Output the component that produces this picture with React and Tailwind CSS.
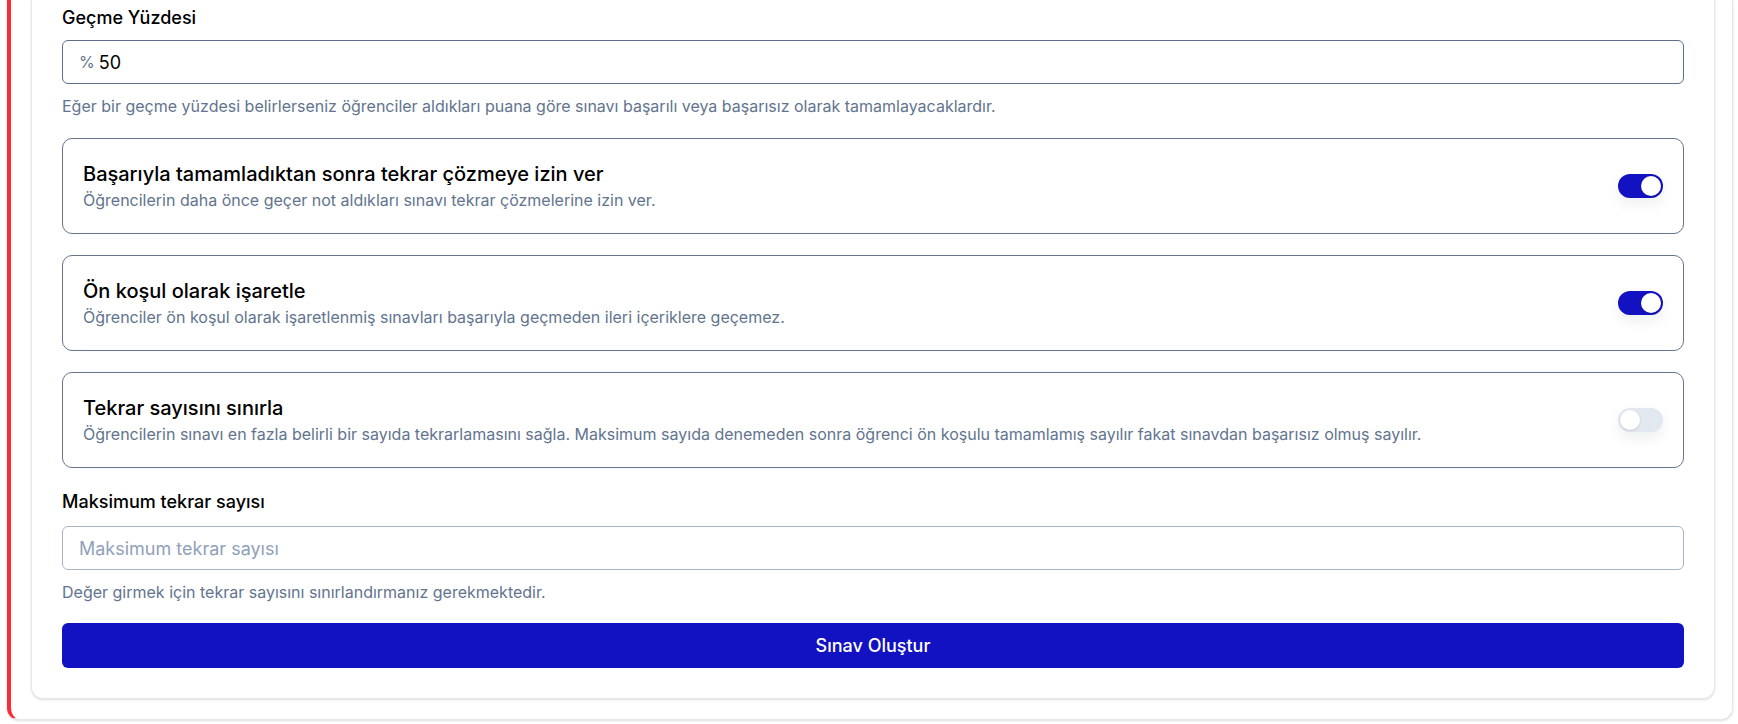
import React, { useState } from 'react';

const font = { fontFamily: 'Inter, "Noto Sans", sans-serif' };

function Toggle({ checked, onChange }) {
  return (
    <button
      type="button"
      onClick={() => onChange(!checked)}
      className={`relative flex h-6 w-[45px] shrink-0 items-center rounded-full px-[2px] shadow-[0_6px_14px_rgba(15,23,42,0.07)] transition-colors ${
        checked ? 'bg-[#1212c2] justify-end' : 'bg-slate-200 justify-start'
      }`}
    >
      <span className="h-5 w-5 rounded-full bg-white shadow-sm" />
    </button>
  );
}

function OptionCard({ title, description, checked, onChange }) {
  return (
    <div className="flex h-24 items-center justify-between gap-6 rounded-[10px] border border-[#66758c] bg-white pl-5 pr-5">
      <div className="flex flex-col">
        <span className="text-[20px] leading-7 font-medium text-black">{title}</span>
        <span className="text-[16px] leading-6 text-slate-500">{description}</span>
      </div>
      <Toggle checked={checked} onChange={onChange} />
    </div>
  );
}

export default function App() {
  const [allowRetake, setAllowRetake] = useState(true);
  const [prerequisite, setPrerequisite] = useState(true);
  const [limitRetries, setLimitRetries] = useState(false);

  return (
    <div className="min-h-screen bg-white pl-[7px] pr-[5px]" style={font}>
      <div className="rounded-b-xl border-l-4 border-b border-r border-red-500 border-b-gray-200 border-r-gray-200 bg-white pl-5 pr-[17px] pb-5 shadow-sm">
        <div className="rounded-b-xl border border-t-0 border-gray-200 bg-white px-[30px] pt-1 pb-[30px] shadow-sm">
          <label className="block text-[18px] leading-7 font-medium text-black">Geçme Yüzdesi</label>
          <div className="mt-2 flex h-11 items-center rounded-md border border-[#5f6f89] px-4">
            <span className="text-[16px] text-slate-500">%</span>
            <input
              defaultValue="50"
              className="ml-1 flex-1 bg-transparent text-[18px] text-black outline-none"
            />
          </div>
          <p className="mt-[10px] text-[16px] leading-6 text-slate-500">
            Eğer bir geçme yüzdesi belirlerseniz öğrenciler aldıkları puana göre sınavı başarılı veya başarısız olarak tamamlayacaklardır.
          </p>

          <div className="mt-5 flex flex-col gap-[21px]">
            <OptionCard
              title="Başarıyla tamamladıktan sonra tekrar çözmeye izin ver"
              description="Öğrencilerin daha önce geçer not aldıkları sınavı tekrar çözmelerine izin ver."
              checked={allowRetake}
              onChange={setAllowRetake}
            />
            <OptionCard
              title="Ön koşul olarak işaretle"
              description="Öğrenciler ön koşul olarak işaretlenmiş sınavları başarıyla geçmeden ileri içeriklere geçemez."
              checked={prerequisite}
              onChange={setPrerequisite}
            />
            <OptionCard
              title="Tekrar sayısını sınırla"
              description="Öğrencilerin sınavı en fazla belirli bir sayıda tekrarlamasını sağla. Maksimum sayıda denemeden sonra öğrenci ön koşulu tamamlamış sayılır fakat sınavdan başarısız olmuş sayılır."
              checked={limitRetries}
              onChange={setLimitRetries}
            />
          </div>

          <label className="mt-5 block text-[18px] leading-7 font-medium text-black">Maksimum tekrar sayısı</label>
          <input
            disabled={!limitRetries}
            placeholder="Maksimum tekrar sayısı"
            className="mt-[10px] block h-11 w-full rounded-md border border-[#aab4c4] bg-white px-4 text-[18px] text-black outline-none placeholder:text-slate-400"
          />
          <p className="mt-[10px] text-[16px] leading-6 text-slate-500">
            Değer girmek için tekrar sayısını sınırlandırmanız gerekmektedir.
          </p>

          <button
            type="button"
            className="mt-[19px] flex h-[45px] w-full items-center justify-center rounded-md bg-[#1212c2] text-[18px] font-medium text-white"
          >
            Sınav Oluştur
          </button>
        </div>
      </div>
    </div>
  );
}
